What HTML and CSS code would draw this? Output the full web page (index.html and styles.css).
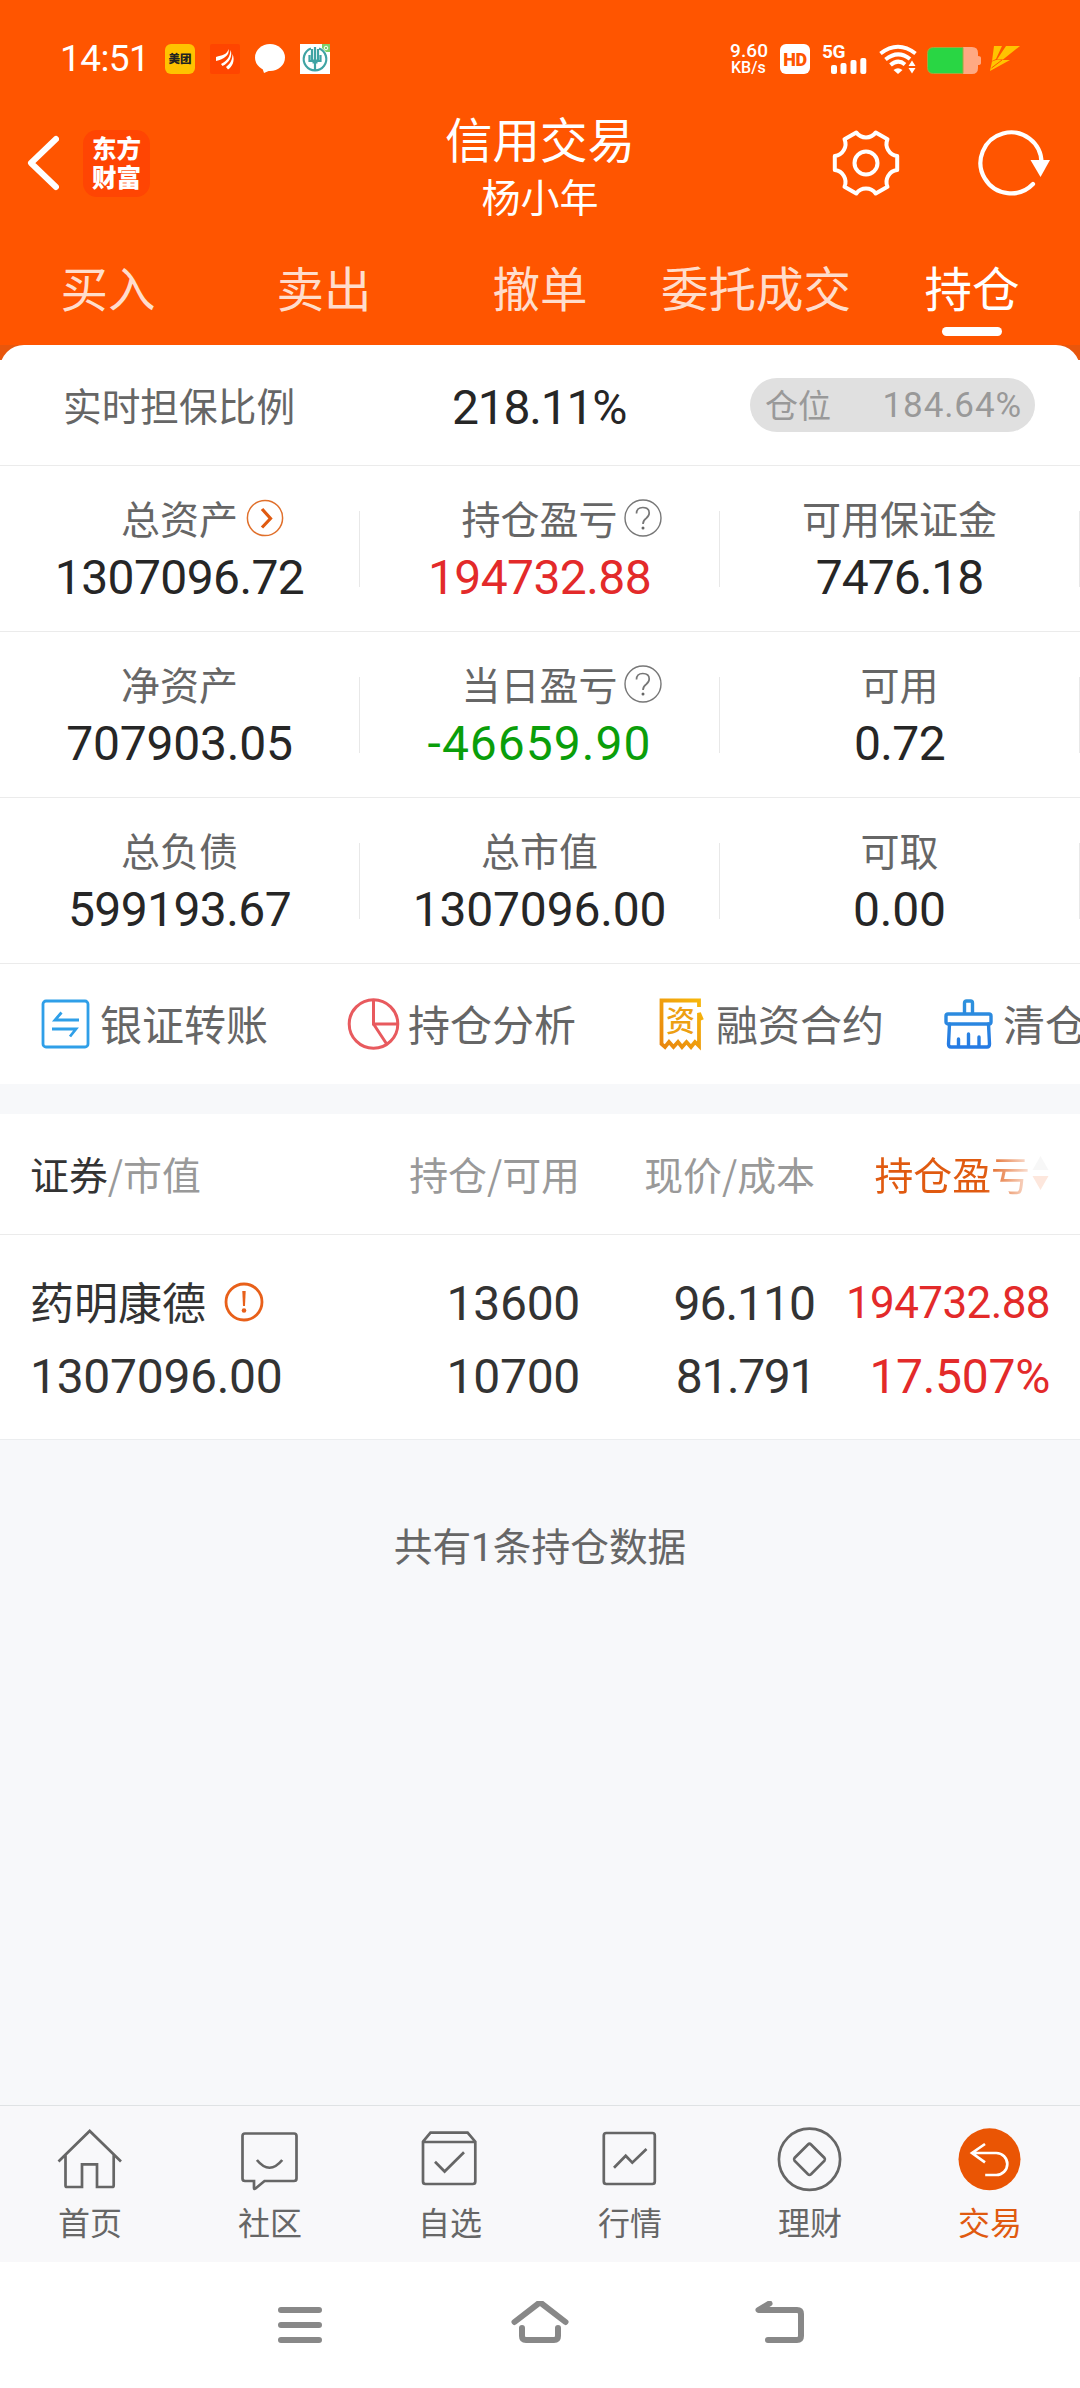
FILE: index.html
```html
<!DOCTYPE html>
<html lang="zh-CN">
<head>
<meta charset="utf-8">
<title>信用交易</title>
<link rel="stylesheet" href="styles.css">
</head>
<body>
<div class="app">
  <header class="header">
    <div class="status">
      <span class="clock">14:51</span>
      <div class="notices">
        <span class="meituan">美团</span>
        <svg width="30" height="30" viewBox="0 0 30 30"><rect width="30" height="30" rx="2" fill="#ff4500"/><path d="M6 13C12 11 17 11 18.500 5C20 11 14 15 6 17ZM11 20C17 17 20 13 20.500 6C23 12 19 19 12.500 22ZM16 23C20 20 22.500 16 22.500 10C25.500 17 22 23 18 25.500Z" fill="#fff"/></svg>
        <svg width="30" height="30" viewBox="0 0 30 30"><ellipse cx="15" cy="13.500" rx="15" ry="13.500" fill="#fff"/><path d="M7 23L9 29L16 26Z" fill="#fff"/></svg>
        <svg width="30" height="30" viewBox="0 0 30 30"><rect width="30" height="30" fill="#fff"/><path d="M22 0H30V8H26L22 4Z" fill="#7ed069"/><circle cx="26" cy="4" r="1.800" fill="none" stroke="#fff"/><g fill="none" stroke="#3fa3a3" stroke-width="2.200"><path d="M11 4.500A11.300 11.300 0 1 0 19 4.500"/><path d="M15 3V26M12 5V17M18 5V17M9.500 11V17H20.500V11"/><path d="M12.500 17.500H17.500" stroke-width="4"/></g></svg>
      </div>
      <div class="signals">
        <div class="speed"><span class="speed-value">9.60</span><span class="speed-unit">KB/s</span></div>
        <span class="hd">HD</span>
        <div class="cell">
          <span class="cell-gen">5G</span>
          <svg class="cell-bars" width="36" height="16" viewBox="0 0 36 16"><g fill="#fff"><rect y="7" width="6" height="9" rx="2"/><rect x="9.500" y="5" width="6" height="11" rx="2"/><rect x="19.500" y="2" width="6" height="14" rx="2"/><rect x="29.300" width="6" height="16" rx="2"/></g></svg>
        </div>
        <svg class="wifi" width="38" height="30" viewBox="0 0 38 30"><g fill="none" stroke="#fff" stroke-width="4"><path d="M1.500 9.500Q19 -4 36.500 9.500"/><path d="M6.500 15.500Q19 5.500 31 15"/><path d="M11.500 21Q19 14.500 26 20.500"/></g><path d="M14.500 26Q19 22.500 23.500 26L19 30Z" fill="#fff"/><path d="M29.500 22L33 16.500L36.500 22ZM29.500 24L33 29.500L36.500 24Z" fill="#fff"/></svg>
        <svg class="battery" width="54" height="27" viewBox="0 0 54 27"><path d="M36 0H45Q51 0 51 6V9Q54 9 54 11V16Q54 18 51 18V21Q51 27 45 27H36Z" fill="#ffa983"/><path d="M36 .5H6.500Q.5 .5 .5 6.500V20.500Q.5 26.500 6.500 26.500H36Z" fill="#29d644" stroke="#a3a83c"/></svg>
        <svg class="bolt" width="30" height="26" viewBox="0 0 30 26"><path d="M4 0H12L6 13L2 15ZM16 0H30L13 13.500H7ZM2 15.500L6 14H20L0 25Z" fill="#ffc400"/><path d="M1.500 22L12 14" stroke="#ff5500" stroke-width="1"/></svg>
      </div>
    </div>

    <div class="titlebar">
      <div class="title-left">
        <svg width="32" height="56" viewBox="0 0 32 56"><path d="M29 4L4 28L29 52" fill="none" stroke="#fff" stroke-width="6" stroke-linecap="round" stroke-linejoin="round"/></svg>
        <div class="logo"><span>东方</span><span>财富</span></div>
      </div>
      <div class="title-center">
        <h1 class="title">信用交易</h1>
        <div class="owner">杨小年</div>
      </div>
      <div class="title-right">
        <svg width="70" height="70" viewBox="-35 -35 70 70"><g fill="none" stroke="#fff" stroke-width="4" stroke-linejoin="round"><path d="M9.700 -30.500L21.500 -23.700A12 12 0 0 0 31.200 -7L31.200 7A12 12 0 0 0 21.500 23.700L9.700 30.500A12 12 0 0 0 -9.700 30.500L-21.500 23.700A12 12 0 0 0 -31.200 7L-31.200 -7A12 12 0 0 0 -21.500 -23.700L-9.700 -30.500A12 12 0 0 0 9.700 -30.500Z"/><circle r="11.500"/></g></svg>
        <svg width="74" height="70" viewBox="-34 -35 74 70"><path d="M30.500 0A30.500 30.500 0 1 0 22 21" fill="none" stroke="#fff" stroke-width="4.200" stroke-linecap="round"/><path d="M19.500 -3H39L29.500 14Z" fill="#fff"/></svg>
      </div>
    </div>

    <nav class="tabs">
      <span class="tab">买入</span>
      <span class="tab">卖出</span>
      <span class="tab">撤单</span>
      <span class="tab">委托成交</span>
      <span class="tab tab-active">持仓</span>
    </nav>
  </header>

  <div class="sheet-back">
    <section class="sheet">
      <div class="ratio">
        <span class="ratio-label">实时担保比例</span>
        <span class="ratio-value">218.11%</span>
        <div class="pill"><span>仓位</span><span class="pill-value">184.64%</span></div>
      </div>

      <div class="stats">
        <div class="stat">
          <div class="stat-label">总资产<svg class="stat-icon stat-icon-go" width="38" height="38" viewBox="0 0 38 38"><circle cx="19" cy="19" r="17.600" fill="none" stroke="#e0702c" stroke-width="1.500"/><path d="M16 10L24.500 19.500L16 28.500" fill="none" stroke="#e05a10" stroke-width="3.200"/></svg></div>
          <div class="stat-value tight">1307096.72</div>
        </div>
        <div class="stat">
          <div class="stat-label">持仓盈亏<svg class="stat-icon" width="38" height="38" viewBox="0 0 38 38"><circle cx="19" cy="19" r="18" fill="none" stroke="#777" stroke-width="1.400"/><path d="M12.500 14.500Q12.500 8.500 18.800 8.500Q25.200 8.500 25.200 14Q25.200 17 22 19.500Q19 21.500 19 25" fill="none" stroke="#777" stroke-width="1.700"/><circle cx="19" cy="29" r="1.500" fill="#666"/></svg></div>
          <div class="stat-value up tight">194732.88</div>
        </div>
        <div class="stat">
          <div class="stat-label">可用保证金</div>
          <div class="stat-value tighter">7476.18</div>
        </div>
      </div>
      <div class="stats">
        <div class="stat">
          <div class="stat-label">净资产</div>
          <div class="stat-value">707903.05</div>
        </div>
        <div class="stat">
          <div class="stat-label">当日盈亏<svg class="stat-icon" width="38" height="38" viewBox="0 0 38 38"><circle cx="19" cy="19" r="18" fill="none" stroke="#777" stroke-width="1.400"/><path d="M12.500 14.500Q12.500 8.500 18.800 8.500Q25.200 8.500 25.200 14Q25.200 17 22 19.500Q19 21.500 19 25" fill="none" stroke="#777" stroke-width="1.700"/><circle cx="19" cy="29" r="1.500" fill="#666"/></svg></div>
          <div class="stat-value down">-46659.90</div>
        </div>
        <div class="stat">
          <div class="stat-label">可用</div>
          <div class="stat-value tight">0.72</div>
        </div>
      </div>
      <div class="stats">
        <div class="stat">
          <div class="stat-label">总负债</div>
          <div class="stat-value tight">599193.67</div>
        </div>
        <div class="stat">
          <div class="stat-label">总市值</div>
          <div class="stat-value">1307096.00</div>
        </div>
        <div class="stat">
          <div class="stat-label">可取</div>
          <div class="stat-value">0.00</div>
        </div>
      </div>

      <div class="actions">
        <div class="action">
          <svg width="54" height="54" viewBox="0 0 54 54"><rect x="5" y="4" width="45" height="46" rx="3" fill="none" stroke="#2f9fe8" stroke-width="2.800"/><path d="M41 23H17L23.500 15.500M14 32H38L32 39.500" fill="none" stroke="#2f9fe8" stroke-width="2.800"/></svg>
          <span>银证转账</span>
        </div>
        <div class="action">
          <svg width="54" height="54" viewBox="0 0 54 54"><g fill="none" stroke="#e85a5e" stroke-width="3"><circle cx="27.500" cy="27" r="24.300"/><path d="M27.500 2V27H52M27.500 27L41 47.500"/></g></svg>
          <span>持仓分析</span>
        </div>
        <div class="action action-last-gap">
          <svg width="54" height="54" viewBox="0 0 54 54"><defs><linearGradient id="gold" x1="0" y1="1" x2="1" y2="0"><stop offset="0" stop-color="#e8850e"/><stop offset="1" stop-color="#f7b80c"/></linearGradient></defs><path d="M45 10V3.500H7.500V47L11 50L15 45L19.500 50L24 45L28 50L32.500 45L37 50L41 45L45 49V16L48 23" fill="none" stroke="url(#gold)" stroke-width="3.800"/><text x="26.500" y="34.500" font-size="29" font-weight="500" text-anchor="middle" fill="#eda012">资</text></svg>
          <span>融资合约</span>
        </div>
        <div class="action">
          <svg width="54" height="54" viewBox="0 0 54 54"><defs><linearGradient id="blue" gradientUnits="userSpaceOnUse" x1="0" y1="0" x2="0" y2="54"><stop offset="0" stop-color="#2f93dc"/><stop offset="1" stop-color="#2478e4"/></linearGradient></defs><g fill="none" stroke="url(#blue)" stroke-width="3.400" stroke-linejoin="round" stroke-linecap="round"><path d="M23.500 16V6Q23.500 4 25.500 4H29.500Q31.500 4 31.500 6V16"/><rect x="5" y="17" width="45" height="10" rx="2"/><path d="M8.500 27L7.500 47Q7.500 50 10 50H46Q48.500 50 48.500 47L47.500 27M17.500 49V42M27.500 49V37M38 49V40"/></g></svg>
          <span>清仓</span>
        </div>
      </div>
    </section>
  </div>

  <section class="holdings">
    <div class="holdings-head">
      <span><b class="sorted">证券</b>/市值</span>
      <span>持仓/可用</span>
      <span>现价/成本</span>
      <div class="profit-head"><span>持仓盈亏</span><svg width="17" height="36" viewBox="0 0 17 36"><path d="M8.500 1L16.500 15H.5Z" fill="#f7f7f7"/><path d="M8.500 35L16.500 21H.5Z" fill="#fde7dd"/></svg></div>
    </div>
    <div class="holding">
      <div class="holding-cell holding-name">
        <div class="stock">药明康德<svg width="40" height="40" viewBox="0 0 40 40"><circle cx="20" cy="20" r="18" fill="none" stroke="#e8601a" stroke-width="2.800"/><path d="M18.300 9H21.700L21 24H19Z" fill="#e8601a"/><circle cx="20" cy="28.500" r="2.300" fill="#e8601a"/></svg></div>
        <span>1307096.00</span>
      </div>
      <div class="holding-cell"><span>13600</span><span>10700</span></div>
      <div class="holding-cell"><span class="price">96.110</span><span class="cost">81.791</span></div>
      <div class="holding-cell up"><span class="profit">194732.88</span><span>17.507%</span></div>
    </div>
  </section>

  <p class="total">共有<span class="num">1</span>条持仓数据</p>

  <nav class="navbar">
    <div class="nav-item"><svg width="72" height="72" viewBox="0 0 72 72"><path d="M4.500 38.500L35.700 8L67 38.500M11.500 32V62.500Q11.500 64 13 64H28V41.300H43V64H58Q59.700 64 59.700 62.500V32"/></svg><span>首页</span></div>
    <div class="nav-item"><svg width="72" height="72" viewBox="0 0 72 72"><path d="M11 10.500H60Q62.500 10.500 62.500 13V55.500Q62.500 58 60 58H30.500L21.500 65.500Q20 66.500 20 65V58H11Q8.500 58 8.500 55.500V13Q8.500 10.500 11 10.500ZM22.900 37Q35.500 52.500 48.200 37"/></svg><span>社区</span></div>
    <div class="nav-item"><svg width="72" height="72" viewBox="0 0 72 72"><path d="M9 18.700L16.500 9.700H53.600L61.300 18.700V58.500Q61.300 61 58.800 61H11.500Q9 61 9 58.500ZM9 19H61M21 38.700L30.600 48.500L50 29.300"/></svg><span>自选</span></div>
    <div class="nav-item"><svg width="72" height="72" viewBox="0 0 72 72"><rect x="9.800" y="10" width="51" height="51" rx="2.500"/><path d="M20 44.700L31.700 32.700L38.300 39.700L52.500 26"/></svg><span>行情</span></div>
    <div class="nav-item"><svg width="72" height="72" viewBox="0 0 72 72"><circle cx="35.500" cy="36.300" r="30.600"/><path d="M34 21.500L20.500 35Q19.500 36.300 20.500 37.600L34 51.200Q35.500 52.500 37 51.200L50.500 37.600Q51.500 36.300 50.500 35L37 21.500Q35.500 20 34 21.500Z"/></svg><span>理财</span></div>
    <div class="nav-item nav-active"><svg width="72" height="72" viewBox="0 0 72 72"><circle class="nav-disc" cx="35.500" cy="36.300" r="31"/><path class="nav-arrow" d="M31 21L18 30L31 39.300M18 30H42.300A11 11 0 0 1 42.300 52H31.200"/></svg><span>交易</span></div>
  </nav>

  <div class="sysbar">
    <svg width="60" height="48" viewBox="0 0 60 48"><path d="M11 9H49M11 24H49M11 39H49"/></svg>
    <svg width="60" height="48" viewBox="0 0 60 48"><path d="M4.500 21L28 2.800Q30 1.200 32 2.800L55.500 21M12 27V35Q12 39 16 39H44Q48 39 48 35V27"/></svg>
    <svg width="60" height="48" viewBox="0 0 60 48"><path d="M19.500 2.500L8.500 9H47Q51 9 51 13V35Q51 39 47 39H18"/></svg>
  </div>
</div>
</body>
</html>
```
FILE: styles.css
```css
* {
  box-sizing: border-box;
}

body {
  margin: 0;
  background: #f7f8fa;
  font-family: "Noto Sans CJK SC", "Noto Sans", sans-serif;
  color: #262626;
}

svg {
  display: block;
  flex: none;
}

.app {
  width: 1080px;
  height: 2388px;
  display: flex;
  flex-direction: column;
  overflow: hidden;
}

/* header */
.header {
  flex: none;
  height: 345px;
  background: #ff5500;
  color: #fff;
}

.status {
  height: 90px;
  padding: 28px 60px 0 60px;
  display: flex;
  align-items: center;
}

.clock {
  width: 105px;
  font: 400 37px/60px Roboto, sans-serif;
  letter-spacing: -0.6px;
}

.notices {
  display: flex;
  gap: 15px;
}

.meituan {
  width: 30px;
  height: 30px;
  border-radius: 6px;
  background: #ffc300;
  color: #222;
  font-size: 11.500px;
  font-weight: 900;
  line-height: 29px;
  text-align: center;
}

.signals {
  margin-left: auto;
  display: flex;
  align-items: center;
}

.speed {
  width: 50px;
  display: flex;
  flex-direction: column;
  font: 500 19px/17px Roboto, sans-serif;
}

.speed-value {
  letter-spacing: 0.1px;
}

.speed-unit {
  padding-left: 1px;
  font-size: 16px;
}

.hd {
  width: 30px;
  height: 30px;
  border-radius: 6px;
  background: #fff;
  color: #ff5500;
  font: 900 18px/31px Roboto, sans-serif;
  letter-spacing: -0.5px;
  text-align: center;
}

.cell {
  width: 45px;
  height: 30px;
  margin-left: 12px;
  display: flex;
  flex-direction: column;
}

.cell-gen {
  font: 700 19px/15px Roboto, sans-serif;
  letter-spacing: -0.5px;
}

.cell-bars {
  margin: -1px 0 0 9px;
}

.wifi {
  margin-left: 12px;
}

.battery {
  margin: 2px 0 0 10px;
}

.bolt {
  margin-left: 9px;
}

.titlebar {
  height: 146px;
  display: grid;
  grid-template-columns: 1fr auto 1fr;
  align-items: center;
}

.title-left {
  padding-left: 27px;
  display: flex;
  align-items: center;
  gap: 24px;
}

.logo {
  width: 67px;
  height: 67px;
  border-radius: 14px;
  background: #ff4503;
  display: flex;
  flex-direction: column;
  align-items: center;
  justify-content: center;
  font-size: 24.500px;
  font-weight: 900;
  line-height: 29px;
  padding-bottom: 3px;
}

.title-center {
  padding-top: 5px;
  text-align: center;
}

.title {
  margin: 0;
  font-size: 47.500px;
  font-weight: 400;
  line-height: 58px;
}

.owner {
  font-size: 39px;
  line-height: 56px;
}

.title-right {
  padding-right: 29px;
  display: flex;
  justify-content: flex-end;
  gap: 76px;
}

.tabs {
  height: 109px;
  display: grid;
  grid-template-columns: repeat(5, 1fr);
}

.tab {
  position: relative;
  color: #ffddcc;
  font-size: 47.500px;
  line-height: 101px;
  text-align: center;
}

.tab-active {
  color: #fff;
}

.tab-active::after {
  content: "";
  position: absolute;
  left: 78px;
  bottom: 9px;
  width: 60px;
  height: 9px;
  border-radius: 5px;
  background: #fff;
}

/* account summary */
.sheet-back {
  flex: none;
  background: linear-gradient(#e8560c 15px, #fff 15px);
}

.sheet {
  border-radius: 24px 24px 0 0;
  background: #fff;
}

.ratio {
  height: 121px;
  padding: 0 45px 0 63px;
  border-bottom: 1px solid #ebebeb;
  display: flex;
  align-items: center;
}

.ratio-label {
  width: 389px;
  padding-bottom: 3px;
  color: #666;
  font-size: 38.700px;
}

.ratio-value {
  padding-top: 5px;
  font: 400 48px/60px Roboto, sans-serif;
  letter-spacing: -1.2px;
}

.pill {
  width: 285px;
  height: 54px;
  margin-left: auto;
  padding: 0 13px 0 15px;
  border-radius: 27px;
  background: #e0e0e0;
  color: #999;
  display: flex;
  align-items: center;
  justify-content: space-between;
  font-size: 33px;
  line-height: 48px;
}

.pill > :first-child {
  padding-bottom: 2px;
}

.pill-value {
  padding-top: 1px;
  font: 400 35px/54px Roboto, sans-serif;
  letter-spacing: 0.9px;
}

.stats {
  height: 166px;
  border-bottom: 1px solid #ebebeb;
  display: grid;
  grid-template-columns: repeat(3, 1fr);
  align-items: center;
}

.stat {
  height: 76px;
  border-right: 1px solid #e8e8e8;
  display: flex;
  flex-direction: column;
  align-items: center;
  justify-content: center;
}

.stat-label {
  position: relative;
  color: #666;
  font-size: 39px;
  line-height: 58px;
}

.stat-icon {
  position: absolute;
  left: calc(100% + 6px);
  top: 11px;
}

.stat-icon-go {
  left: calc(100% + 8px);
}

.stat-value {
  font: 400 48px/64px Roboto, sans-serif;
  letter-spacing: -0.2px;
}

.up {
  color: #e32a2a;
}

.down {
  color: #0a9e0a;
  letter-spacing: 1px;
}

.tight {
  letter-spacing: -0.6px;
}

.tighter {
  letter-spacing: -1px;
}

.actions {
  height: 120px;
  padding-left: 38px;
  display: flex;
  align-items: center;
  overflow: hidden;
}

.action {
  flex: none;
  margin-right: 78px;
  display: flex;
  align-items: center;
  gap: 8px;
  color: #666;
  font-size: 42px;
  line-height: 58px;
}

.action span {
  padding-bottom: 2px;
}

.action-last-gap {
  margin-right: 57px;
}

/* holdings table */
.holdings {
  flex: none;
  margin-top: 30px;
  border-bottom: 1px solid #ebedef;
  background: #fff;
}

.holdings-head,
.holding {
  display: grid;
  grid-template-columns: 300px 250px 235px 1fr;
  padding: 0 30px;
  text-align: right;
}

.holdings-head {
  height: 121px;
  padding-bottom: 2px;
  border-bottom: 1px solid #ebebeb;
  align-items: center;
  color: #999;
  font-size: 38.900px;
  line-height: 58px;
}

.holdings-head > :first-child,
.holding-name {
  text-align: left;
}

.sorted {
  color: #333;
  font-weight: 400;
}

.profit-head {
  padding-right: 1px;
  display: flex;
  align-items: center;
  justify-content: flex-end;
  gap: 2px;
  color: #e05a10;
}

.profit-head span {
  background: linear-gradient(90deg, #e05a10 110px, #fae0d4 155px);
  background-clip: text;
  -webkit-background-clip: text;
  color: transparent;
}

.holding {
  height: 204px;
  padding-top: 32px;
  color: #333;
}

.holding-cell {
  display: flex;
  flex-direction: column;
  font: 400 48px/73px Roboto, sans-serif;
  letter-spacing: -0.3px;
}

.holding-cell.up {
  color: #e32a2a;
}

.stock {
  height: 73px;
  padding-bottom: 5px;
  display: flex;
  align-items: center;
  gap: 18px;
  font: 400 44px/67px "Noto Sans CJK SC", sans-serif;
  letter-spacing: 0;
}

.stock svg {
  margin-bottom: -1px;
}

.price {
  letter-spacing: -1px;
}

.cost {
  letter-spacing: -1.4px;
}

.profit {
  font-size: 44px;
  letter-spacing: -0.6px;
}

.total {
  margin: 75px 0 0;
  color: #666;
  font-size: 38.700px;
  line-height: 58px;
  text-align: center;
}

.num {
  font-family: Roboto, sans-serif;
}

/* app navigation */
.navbar {
  flex: none;
  height: 157px;
  margin-top: auto;
  padding-top: 17px;
  border-top: 1px solid #dfe2e4;
  background: #f8f8fa;
  display: grid;
  grid-template-columns: repeat(6, 1fr);
}

.nav-item {
  display: flex;
  flex-direction: column;
  align-items: center;
  color: #666;
  font-size: 32px;
  line-height: 48px;
}

.nav-item svg {
  margin-bottom: 2px;
  fill: none;
  stroke: #666;
  stroke-width: 2.700;
}

.nav-active {
  color: #e05a10;
}

.nav-item .nav-disc {
  fill: #ea5504;
  stroke: none;
}

.nav-item .nav-arrow {
  stroke: #fff;
}

/* system navigation */
.sysbar {
  flex: none;
  height: 126px;
  background: #fff;
  display: flex;
  justify-content: center;
  align-items: center;
  gap: 180px;
}

.sysbar svg {
  fill: none;
  stroke: #888;
  stroke-width: 6;
  stroke-linecap: round;
  stroke-linejoin: round;
}
```
